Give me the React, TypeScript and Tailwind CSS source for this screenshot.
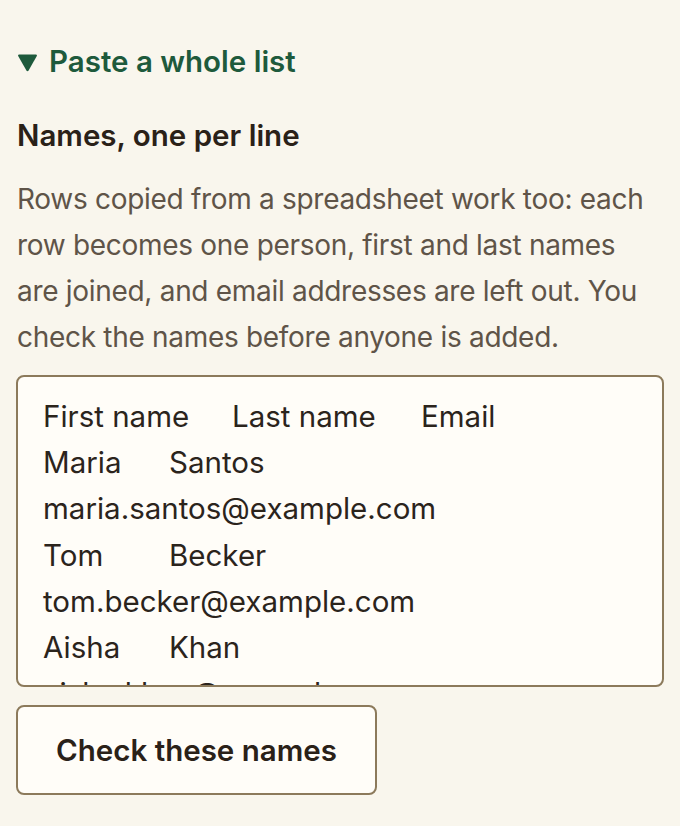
import React from 'react';

const sample = [
  'First name\tLast name\tEmail',
  'Maria\tSantos\tmaria.santos@example.com',
  'Tom\tBecker\ttom.becker@example.com',
  'Aisha\tKhan\taisha.khan@example.com',
  'Daniel\tOkafor\tdaniel.okafor@example.com',
].join('\n');

export default function App() {
  return (
    <div className="min-h-screen bg-[#f9f6ed] px-4 pt-[40px] font-['Inter',sans-serif] text-[#2b241c]">
      <details open className="group">
        <summary className="flex list-none items-center gap-[11px] pl-[1px] text-[29.5px] font-semibold leading-[42px] text-[#1e5a3c] [&::-webkit-details-marker]:hidden">
          <svg width="21" height="20" viewBox="0 0 21 20" className="mt-[2px]" aria-hidden="true">
            <path d="M2 2.5 H19 Q20.5 2.5 19.8 4 L11.6 18.4 Q10.5 20 9.4 18.4 L1.2 4 Q0.5 2.5 2 2.5 Z" fill="currentColor" />
          </svg>
          <span>Paste a whole list</span>
        </summary>

        <div className="mt-[33px] flex flex-col">
          <label htmlFor="names" className="pl-[1px] text-[29.5px] font-semibold leading-[40px] text-[#2a2118]">
            Names, one per line
          </label>
          <p className="mt-[21px] pl-[1px] text-[28px] leading-[46px] tracking-[-0.3px] text-[#5f5448]">
            Rows copied from a spreadsheet work too: each row becomes one person, first and last names
            are joined, and email addresses are left out. You check the names before anyone is added.
          </p>
          <textarea
            id="names"
            defaultValue={sample}
            spellCheck={false}
            className="mt-[15px] h-[312px] w-full resize-none overflow-hidden rounded-[8px] border-2 border-[#8c7a5b] bg-[#fffdf8] px-[25px] pt-[16px] text-[29.5px] leading-[46.2px] text-[#2b241c] outline-none [tab-size:63px]"
          />
          <div className="mt-[18px]">
            <button
              type="button"
              className="h-[90px] w-[361px] rounded-[8px] border-2 border-[#8c7a5b] bg-[#fffdf8] text-[29.5px] font-semibold text-[#2a2118]"
            >
              Check these names
            </button>
          </div>
        </div>
      </details>
    </div>
  );
}
